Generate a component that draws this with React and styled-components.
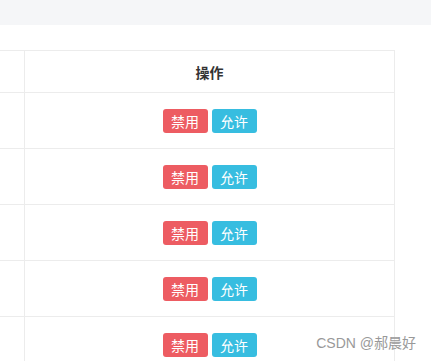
import React from 'react'
import styled, { createGlobalStyle } from 'styled-components';

const Global = createGlobalStyle`
  html, body { margin:0; padding:0; background:#fff; overflow:hidden; }
  body { font-family: "Noto Sans CJK SC", "Noto Sans", sans-serif; font-size:14px; color:#333; }
`;

const rows = [1, 2, 3, 4, 5]

const App = () => {
  return (
    <Page>
      <Global />
      <TopBar />
      <Content>
        <Table>
          <thead>
            <tr>
              <HeadCell className="first"></HeadCell>
              <HeadCell>操作</HeadCell>
            </tr>
          </thead>
          <tbody>
            {rows.map(r => (
              <tr key={r}>
                <Cell className="first"></Cell>
                <Cell>
                  <Actions>
                    <Label tone="danger">禁用</Label>
                    <Label tone="info">允许</Label>
                  </Actions>
                </Cell>
              </tr>
            ))}
          </tbody>
        </Table>
      </Content>
      <Watermark>CSDN @郝晨好</Watermark>
    </Page>
  )
}

export default App

const Page = styled.div`
  position:relative; width:431px; height:361px; overflow:hidden; background:#fff;
`;

const TopBar = styled.div`
  height:25px; background:#f5f6f8;
`;

const Content = styled.div`
  padding-top:25px;
`;

const Table = styled.table`
  border-collapse:collapse; margin-left:-101px; width:496px;
  td, th { border:1px solid #ececec; }
  .first { width:124px; }
`;

const Cell = styled.td`
  height:55px; padding:0; text-align:center; vertical-align:middle;
`;

const HeadCell = styled.th`
  height:41px; padding:0; text-align:center; font-weight:bold; color:#333; font-size:14px;
`;

const Actions = styled.div`
  display:flex; justify-content:center; gap:4px;
`;

const Label = styled.span`
  display:inline-flex; align-items:center; justify-content:center;
  width:45px; height:24px; border-radius:3px; color:#fff; font-size:14px;
  background:${p => p.tone === 'danger' ? '#ed5c62' : '#37bde0'};
`;

const Watermark = styled.div`
  position:absolute; right:15px; bottom:9px; color:#999; font-size:14px;
  font-family:"Liberation Sans", "Noto Sans CJK SC", sans-serif;
`;
